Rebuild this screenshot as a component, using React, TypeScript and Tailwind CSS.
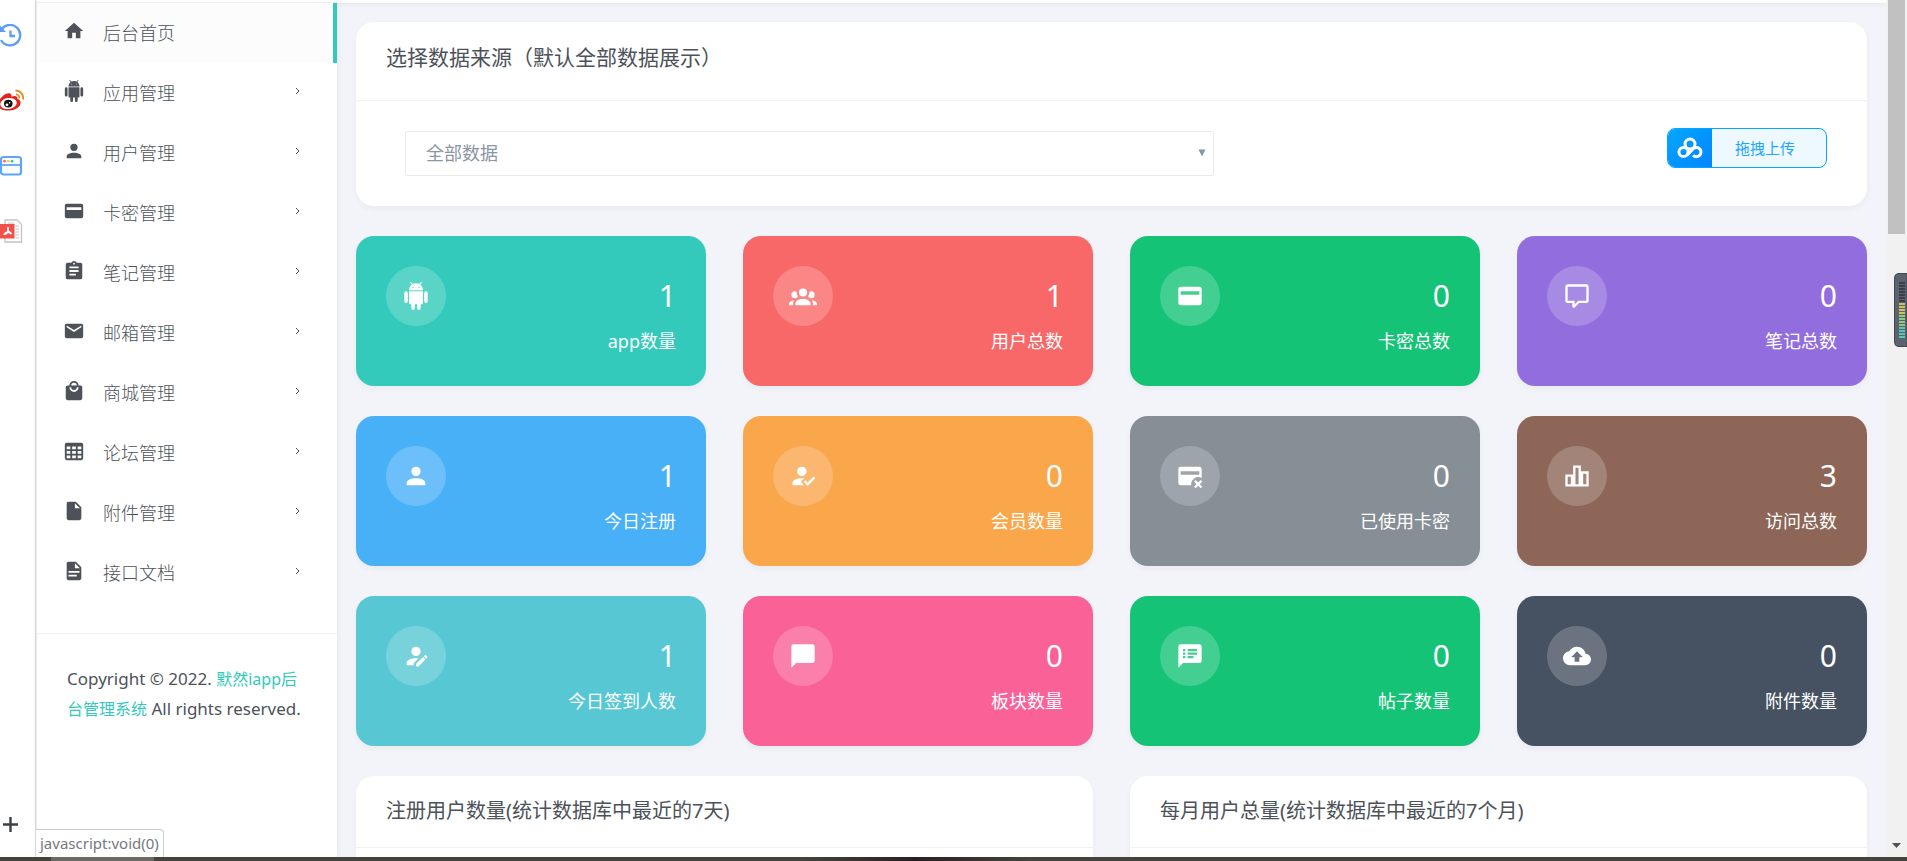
const icons = {
  home: 'M10,20V14H14V20H19V12H22L12,3L2,12H5V20H10Z',
  android:
    'M15,5H14V4H15M10,5H9V4H10M15.53,2.16L16.84,0.85C17.03,0.66 17.03,0.34 16.84,0.14C16.64,-0.05 16.32,-0.05 16.13,0.14L14.65,1.62C13.85,1.23 12.95,1 12,1C11.04,1 10.14,1.23 9.34,1.63L7.85,0.14C7.66,-0.05 7.34,-0.05 7.15,0.14C6.95,0.34 6.95,0.66 7.15,0.85L8.46,2.16C6.97,3.26 6,5 6,7H18C18,5 17,3.25 15.53,2.16M20.5,8A1.5,1.5 0 0,0 19,9.5V16.5A1.5,1.5 0 0,0 20.5,18A1.5,1.5 0 0,0 22,16.5V9.5A1.5,1.5 0 0,0 20.5,8M3.5,8A1.5,1.5 0 0,0 2,9.5V16.5A1.5,1.5 0 0,0 3.5,18A1.5,1.5 0 0,0 5,16.5V9.5A1.5,1.5 0 0,0 3.5,8M6,18A1,1 0 0,0 7,19H8V22.5A1.5,1.5 0 0,0 9.5,24A1.5,1.5 0 0,0 11,22.5V19H13V22.5A1.5,1.5 0 0,0 14.5,24A1.5,1.5 0 0,0 16,22.5V19H17A1,1 0 0,0 18,18V8H6V18Z',
  account:
    'M12,4A4,4 0 0,1 16,8A4,4 0 0,1 12,12A4,4 0 0,1 8,8A4,4 0 0,1 12,4M12,14C16.42,14 20,15.79 20,18V20H4V18C4,15.79 7.58,14 12,14Z',
  card: 'M4,4H20A2,2 0 0,1 22,6V18A2,2 0 0,1 20,20H4A2,2 0 0,1 2,18V6A2,2 0 0,1 4,4M4,8V11H20V8H4Z',
  clipboard:
    'M17,9H7V7H17M17,13H7V11H17M14,17H7V15H14M12,3A1,1 0 0,1 13,4A1,1 0 0,1 12,5A1,1 0 0,1 11,4A1,1 0 0,1 12,3M19,3H14.82C14.4,1.84 13.3,1 12,1C10.7,1 9.6,1.84 9.18,3H5A2,2 0 0,0 3,5V19A2,2 0 0,0 5,21H19A2,2 0 0,0 21,19V5A2,2 0 0,0 19,3Z',
  email:
    'M20,8L12,13L4,8V6L12,11L20,6M20,4H4C2.89,4 2,4.89 2,6V18A2,2 0 0,0 4,20H20A2,2 0 0,0 22,18V6C22,4.89 21.1,4 20,4Z',
  shopping:
    'M12,13A5,5 0 0,1 7,8H9A3,3 0 0,0 12,11A3,3 0 0,0 15,8H17A5,5 0 0,1 12,13M12,3A3,3 0 0,1 15,6H9A3,3 0 0,1 12,3M19,6H17A5,5 0 0,0 12,1A5,5 0 0,0 7,6H5C3.89,6 3,6.89 3,8V20A2,2 0 0,0 5,22H19A2,2 0 0,0 21,20V8C21,6.89 20.1,6 19,6Z',
  table:
    'M4,3H20A2,2 0 0,1 22,5V20A2,2 0 0,1 20,22H4A2,2 0 0,1 2,20V5A2,2 0 0,1 4,3M4,7V10H8V7H4M10,7V10H14V7H10M20,10V7H16V10H20M4,12V15H8V12H4M4,20H8V17H4V20M10,12V15H14V12H10M10,20H14V17H10V20M20,20V17H16V20H20M20,12H16V15H20V12Z',
  file: 'M13,9V3.5L18.5,9M6,2C4.89,2 4,2.89 4,4V20A2,2 0 0,0 6,22H18A2,2 0 0,0 20,20V8L14,2H6Z',
  fileDocument:
    'M13,9H18.5L13,3.5V9M6,2H14L20,8V20A2,2 0 0,1 18,22H6C4.89,22 4,21.1 4,20V4C4,2.89 4.89,2 6,2M15,18V16H6V18H15M18,14V12H6V14H18Z',
  group:
    'M12,5.5A3.5,3.5 0 0,1 15.5,9A3.5,3.5 0 0,1 12,12.5A3.5,3.5 0 0,1 8.5,9A3.5,3.5 0 0,1 12,5.5M5,8C5.56,8 6.08,8.15 6.53,8.42C6.38,9.85 6.8,11.27 7.66,12.38C7.16,13.34 6.16,14 5,14A3,3 0 0,1 2,11A3,3 0 0,1 5,8M19,8A3,3 0 0,1 22,11A3,3 0 0,1 19,14C17.84,14 16.84,13.34 16.34,12.38C17.2,11.27 17.62,9.85 17.47,8.42C17.92,8.15 18.44,8 19,8M5.5,18.25C5.5,16.18 8.41,14.5 12,14.5C15.59,14.5 18.5,16.18 18.5,18.25V20H5.5V18.25M0,20V18.5C0,17.11 1.89,15.94 4.45,15.6C3.86,16.28 3.5,17.22 3.5,18.25V20H0M24,20H20.5V18.25C20.5,17.22 20.14,16.28 19.55,15.6C22.11,15.94 24,17.11 24,18.5V20Z',
  comment:
    'M9,22A1,1 0 0,1 8,21V18H4A2,2 0 0,1 2,16V4C2,2.89 2.9,2 4,2H20A2,2 0 0,1 22,4V16A2,2 0 0,1 20,18H13.9L10.2,21.71C10,21.9 9.75,22 9.5,22V22H9M10,16V19.08L13.08,16H20V4H4V16H10Z',
  accountCheck:
    'M21.1,12.5L22.5,13.91L15.97,20.5L12.5,17L13.9,15.59L15.97,17.67L21.1,12.5M10,17L13,20H3V18C3,15.79 6.58,14 11,14L12.89,14.11L10,17M11,4A4,4 0 0,1 15,8A4,4 0 0,1 11,12A4,4 0 0,1 7,8A4,4 0 0,1 11,4Z',
  cardRemove:
    'M4,4H20A2,2 0 0,1 22,6V13.8A6,6 0 0,0 13.09,20H4A2,2 0 0,1 2,18V6A2,2 0 0,1 4,4M4,8V11H20V8H4M22.54,16.88L20.41,19L22.54,21.12L21.12,22.54L19,20.41L16.88,22.54L15.47,21.12L17.59,19L15.47,16.88L16.88,15.47L19,17.59L21.12,15.47Z',
  chart: 'M2,10.7H8.7V3H15.3V8H22V21H2V10.7M4,12.7V19H6.7V12.7H4M10.7,5V19H13.3V5H10.7M17.3,10V19H20V10H17.3Z',
  accountEdit:
    'M21.7,13.35L20.7,14.35L18.65,12.3L19.65,11.3C19.86,11.09 20.21,11.09 20.42,11.3L21.7,12.58C21.91,12.79 21.91,13.14 21.7,13.35M12,18.94L18.06,12.88L20.11,14.93L14.06,21H12V18.94M12,14C7.58,14 4,15.79 4,18V20H10V18.11L14,14.11C13.34,14.03 12.67,14 12,14M12,4A4,4 0 0,0 8,8A4,4 0 0,0 12,12A4,4 0 0,0 16,8A4,4 0 0,0 12,4Z',
  message: 'M20,2H4A2,2 0 0,0 2,4V22L6,18H20A2,2 0 0,0 22,16V4C22,2.89 21.1,2 20,2Z',
  messageList:
    'M20,2H4A2,2 0 0,0 2,4V22L6,18H20A2,2 0 0,0 22,16V4C22,2.89 21.1,2 20,2M8,14H6V12H8V14M8,11H6V9H8V11M8,8H6V6H8V8M15,14H10V12H15V14M18,11H10V9H18V11M18,8H10V6H18V8Z',
  cloudUpload:
    'M14,13V17H10V13H7L12,8L17,13M19.35,10.03C18.67,6.59 15.64,4 12,4C9.11,4 6.6,5.64 5.35,8.03C2.34,8.36 0,10.9 0,14A6,6 0 0,0 6,20H19A5,5 0 0,0 24,15C24,12.36 21.95,10.22 19.35,10.03Z',
};

type IconName = keyof typeof icons;

const menu: { icon: IconName; label: string }[] = [
  { icon: 'home', label: '后台首页' },
  { icon: 'android', label: '应用管理' },
  { icon: 'account', label: '用户管理' },
  { icon: 'card', label: '卡密管理' },
  { icon: 'clipboard', label: '笔记管理' },
  { icon: 'email', label: '邮箱管理' },
  { icon: 'shopping', label: '商城管理' },
  { icon: 'table', label: '论坛管理' },
  { icon: 'file', label: '附件管理' },
  { icon: 'fileDocument', label: '接口文档' },
];

const stats: { icon: IconName; label: string; value: number; color: string }[] = [
  { icon: 'android', label: 'app数量', value: 1, color: 'bg-[#33cabb]' },
  { icon: 'group', label: '用户总数', value: 1, color: 'bg-[#f96868]' },
  { icon: 'card', label: '卡密总数', value: 0, color: 'bg-[#15c377]' },
  { icon: 'comment', label: '笔记总数', value: 0, color: 'bg-[#926dde]' },
  { icon: 'account', label: '今日注册', value: 1, color: 'bg-[#48b0f7]' },
  { icon: 'accountCheck', label: '会员数量', value: 0, color: 'bg-[#faa64b]' },
  { icon: 'cardRemove', label: '已使用卡密', value: 0, color: 'bg-[#868e96]' },
  { icon: 'chart', label: '访问总数', value: 3, color: 'bg-[#8d6658]' },
  { icon: 'accountEdit', label: '今日签到人数', value: 1, color: 'bg-[#57c7d4]' },
  { icon: 'message', label: '板块数量', value: 0, color: 'bg-[#f96197]' },
  { icon: 'messageList', label: '帖子数量', value: 0, color: 'bg-[#15c377]' },
  { icon: 'cloudUpload', label: '附件数量', value: 0, color: 'bg-[#465161]' },
];

const charts = ['注册用户数量(统计数据库中最近的7天)', '每月用户总量(统计数据库中最近的7个月)'];

function Icon({ name, className }: { name: IconName; className: string }) {
  return (
    <svg viewBox="0 0 24 24" fill="currentColor" fillRule="evenodd" className={className}>
      <path d={icons[name]} />
    </svg>
  );
}

function Rail() {
  return (
    <div className="flex w-9 shrink-0 flex-col justify-between border-r border-[#dddddd] bg-white pt-6 pb-[21px]">
      <div className="flex flex-col gap-[41px]">
        <button aria-label="历史记录" className="h-6 w-6">
          <svg viewBox="0 0 24 24" fill="none" stroke="#5b9cf8" strokeWidth="2.3" className="h-6 w-6">
            <path d="M1.5 5.500A10.2 10.2 0 1 1 1 16" />
            <path d="M0 1.5V8H6Z" fill="#5b9cf8" stroke="none" />
            <path d="M10.500 6.5V12H15" />
          </svg>
        </button>
        <button aria-label="微博" className="h-6 w-6">
          <svg viewBox="0 0 24 24" fill="none" className="h-6 w-6">
            <path d="M0 10C3 6 7 3.5 10 4.5C12 5 11.5 7 11.3 7.8C14 6.5 18 6.5 17.5 10C21 11.5 21.5 14 19.5 17C16 22 5 23 0 19.5Z" fill="#e1251b" />
            <ellipse cx="8.5" cy="14.5" rx="8.3" ry="5.5" fill="#fff" transform="rotate(-8 8.5 14.5)" />
            <ellipse cx="8.3" cy="14.6" rx="4.3" ry="3.9" fill="#111" />
            <circle cx="7" cy="15.8" r="1.4" fill="#fff" />
            <circle cx="9.6" cy="13.8" r="0.8" fill="#fff" />
            <path d="M15.5 1.5A7.5 7.5 0 0 1 23 10.5" stroke="#f08519" strokeWidth="1.8" />
            <path d="M16 5.3A4 4 0 0 1 19.3 9.5" stroke="#f08519" strokeWidth="1.6" />
          </svg>
        </button>
        <button aria-label="窗口" className="h-6 w-6">
          <svg viewBox="0 0 24 24" fill="none" className="h-6 w-6">
            <rect x="1" y="3" width="20" height="17.5" rx="2.5" stroke="#5aa6ff" strokeWidth="2.2" />
            <path d="M1 11H21" stroke="#5aa6ff" strokeWidth="1.8" />
            <circle cx="4.5" cy="7.2" r="1.4" fill="#f76767" />
            <circle cx="8.3" cy="7.2" r="1.4" fill="#f9c94c" />
            <circle cx="12.1" cy="7.2" r="1.4" fill="#28d094" />
          </svg>
        </button>
        <button aria-label="PDF" className="h-6 w-6">
          <svg viewBox="0 0 24 24" fill="none" className="h-6 w-6">
            <path d="M5 1H17L21.5 5.5V23H5Z" fill="#fff" stroke="#c4c4c4" strokeWidth="1.3" />
            <path d="M8 4H14M15.5 7H19M15.5 10H19M15.5 13H19M15.5 16H19M15.5 19H19" stroke="#c4c4c4" strokeWidth="1.2" />
            <rect x="0" y="5" width="14.5" height="14.5" fill="#f2504b" />
            <path d="M8 8V12L11.500 15M8 12C7 14.500 5 15.500 3.5 15M5 14C7 12.800 9 13 11.500 14.500" stroke="#fff" strokeWidth="1.7" />
          </svg>
        </button>
      </div>
      <button aria-label="添加" className="h-6 w-6">
        <svg viewBox="0 0 24 24" stroke="#3c3f43" strokeWidth="2.4" className="h-6 w-6">
          <path d="M3 12.5H18M10.5 5V20" />
        </svg>
      </button>
    </div>
  );
}

function Sidebar() {
  return (
    <aside className="z-10 ml-px w-[300px] shrink-0 bg-white pt-[3px] shadow-[0_0_6px_rgba(0,0,0,0.08)]">
      <nav className="pb-[30px]">
        {menu.map((item, i) => (
          <a
            key={item.label}
            href="#"
            className={
              i === 0
                ? 'flex h-[60px] items-center border-r-4 border-[#33cabb] bg-[#fcfcfc] pl-[26px] shadow-[0_-1px_1px_rgba(0,0,0,0.06)]'
                : 'flex h-[60px] items-center pr-9 pl-[26px]'
            }
          >
            <Icon name={item.icon} className="mb-1 h-[22px] w-[22px]" />
            <span className="ml-[18px] flex-1 text-[18px] font-light">{item.label}</span>
            {i > 0 && (
              <svg viewBox="0 0 6 8" fill="none" stroke="currentColor" className="mb-1 h-2 w-1.5">
                <path d="M1 1L4 4L1 7" />
              </svg>
            )}
          </a>
        ))}
      </nav>
      <p className="border-t border-[#f0f0f0] p-[30px] text-[17px] leading-[30px]">
        Copyright © 2022.{' '}
        <a href="#" className="text-[16px] text-[#33cabb]">
          默然iapp后台管理系统
        </a>{' '}
        All rights reserved.
      </p>
    </aside>
  );
}

function SourceCard() {
  return (
    <section className="rounded-[18px] bg-white shadow-[0_3px_6px_rgba(0,0,0,0.04)]">
      <h4 className="border-b border-[#f0f1f3] px-[30px] pt-5 pb-7 text-[21px] leading-[30px]">
        <label htmlFor="source">选择数据来源（默认全部数据展示）</label>
      </h4>
      <div className="flex items-start justify-between pt-[27px] pr-10 pb-[30px] pl-[49px]">
        <div className="relative w-[56.9%] pt-[3px]">
          <select
            id="source"
            className="h-[45px] w-full appearance-none rounded-[2px] border border-[#ebebeb] bg-white px-5 text-[18px] text-[#8b95a5]"
          >
            <option>全部数据</option>
          </select>
          <svg viewBox="0 0 8 8" fill="#8b95a5" className="pointer-events-none absolute top-[21px] right-2 h-2 w-2">
            <path d="M0.5 0.5H7.5L4 7.5Z" />
          </svg>
        </div>
        <button className="flex h-10 w-40 overflow-hidden rounded-lg border border-[#05a5ff] bg-[#edf8ff] text-[15px] text-[#1ea7fb]">
          <span className="flex h-full w-11 items-center justify-center bg-linear-to-br from-[#06a7ff] to-[#0584ff]">
            <svg viewBox="0 0 26 22" fill="none" stroke="#fff" strokeWidth="3" className="h-[22px] w-[26px]">
              <circle cx="13" cy="7" r="5" />
              <circle cx="6.5" cy="15" r="4.6" />
              <path d="M16 18.200A4.6 4.6 0 1 0 16.2 11.700L10 18.2" />
            </svg>
          </span>
          <span className="flex h-full flex-1 items-center justify-center pr-2">拖拽上传</span>
        </button>
      </div>
    </section>
  );
}

function StatCard({ icon, label, value, color }: (typeof stats)[number]) {
  return (
    <div className={`rounded-[18px] p-[30px] text-white shadow-[0_3px_6px_rgba(0,0,0,0.04)] ${color}`}>
      <div className="flex items-center justify-between">
        <span className="flex h-[60px] w-[60px] items-center justify-center rounded-full bg-white/20">
          <Icon name={icon} className="h-7 w-7" />
        </span>
        <span className="text-[30px] leading-[60px]">{value}</span>
      </div>
      <p className="text-right text-[18px] leading-[30px]">{label}</p>
    </div>
  );
}

function Scrollbar() {
  return (
    <div className="flex w-[21px] shrink-0 flex-col justify-between bg-[#f1f1f1] px-0.5">
      <div className="h-[234px] bg-[#c1c1c1]" />
      <svg viewBox="0 0 17 17" fill="#505050" className="mb-1 h-[17px] w-[17px]">
        <path d="M4 7H13L8.5 12Z" />
      </svg>
    </div>
  );
}

// 屏幕边缘的音量电平条
function LevelMeter() {
  const bars = Array.from({ length: 19 }, (_, i) => i);
  return (
    <svg viewBox="0 0 13 74" className="absolute top-[273px] right-0 z-20 h-[74px] w-[13px]">
      <path d="M13 0.5H4Q0.5 1 0.5 5V69Q0.5 73 4 73.5H13Z" fill="#5b6270" stroke="#43474f" />
      {bars.map((i) => (
        <rect
          key={i}
          x="5"
          y={9 + i * 3}
          width="6"
          height="2"
          fill={i < 7 ? '#3a3e45' : i < 11 ? '#cfc25a' : i < 15 ? '#8fca7a' : '#55c8b0'}
        />
      ))}
    </svg>
  );
}

export default function App() {
  return (
    <div className="relative flex h-screen flex-col overflow-hidden bg-[#f3f4fa] font-['Noto_Sans','Noto_Sans_CJK_SC',sans-serif] text-[#4d5259]">
      <div className="flex min-h-0 flex-1">
        <Rail />
        <Sidebar />
        <main className="min-w-0 flex-1 overflow-hidden">
          <div className="h-[3px] bg-white shadow-[0_1px_4px_rgba(0,0,0,0.08)]" />
          <div className="flex flex-col gap-[30px] px-[19px] pt-[19px]">
            <SourceCard />
            <div className="grid grid-cols-4 gap-x-[37px] gap-y-[30px]">
              {stats.map((s) => (
                <StatCard key={s.label} {...s} />
              ))}
            </div>
            <div className="grid grid-cols-2 gap-x-[37px]">
              {charts.map((title) => (
                <section key={title} className="rounded-[18px] bg-white shadow-[0_3px_6px_rgba(0,0,0,0.04)]">
                  <h4 className="border-b border-[#f0f1f3] px-[30px] pt-5 pb-[21px] text-[20px] leading-[30px]">
                    {title}
                  </h4>
                  <div className="h-80" />
                </section>
              ))}
            </div>
          </div>
        </main>
        <Scrollbar />
      </div>

      <LevelMeter />
      <div className="absolute bottom-1 left-9 z-20 rounded-tr border-t border-r border-[#cccccc] bg-white px-1 text-[15px] leading-[27px] text-[#76797d]">
        javascript:void(0)
      </div>
      <div className="z-20 flex h-1 shrink-0 justify-between bg-linear-to-r from-[#46443a] from-42% via-[#2a2024] via-48% to-[#46443a] to-54% pl-[51px]">
        <div className="h-full w-[103px] bg-[#6b6962]" />
      </div>
    </div>
  );
}
